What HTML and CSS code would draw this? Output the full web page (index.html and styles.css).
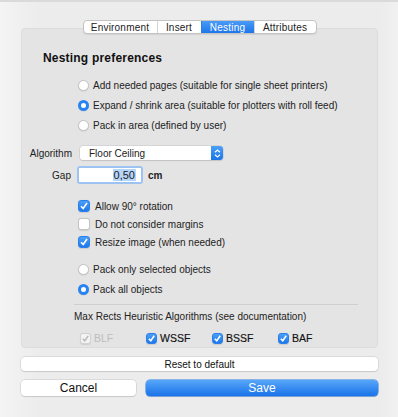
FILE: index.html
```html
<!DOCTYPE html>
<html lang="en">
<head>
    <meta charset="utf-8" />
    <title>Preferences</title>
    <link rel="stylesheet" href="styles.css">
</head>
<body>
    <div class="window">
        <div class="tabs">
            <span class="tab">Environment</span>
            <span class="tab">Insert</span>
            <span class="tab active">Nesting</span>
            <span class="tab">Attributes</span>
        </div>

        <div class="group">
            <h2 class="title">Nesting preferences</h2>

            <div class="options">
                <label class="row radio-row"><span class="radio"></span>Add needed pages (suitable for single sheet printers)</label>
                <label class="row radio-row"><span class="radio on"></span>Expand / shrink area (suitable for plotters with roll feed)</label>
                <label class="row radio-row"><span class="radio"></span>Pack in area (defined by user)</label>
            </div>

            <div class="field algo">
                <span class="field-label">Algorithm</span>
                <div class="popup">
                    <span class="popup-text">Floor Ceiling</span>
                    <span class="stepper">
                        <svg width="7" height="9" viewBox="0 0 7 9">
                            <path d="M1 3.2 L3.5 1 L6 3.2 M1 5.8 L3.5 8 L6 5.8" fill="none" stroke="#fff" stroke-width="1.2" />
                        </svg>
                    </span>
                </div>
            </div>

            <div class="field gap">
                <span class="field-label gap-label">Gap</span>
                <div class="input-ring">
                    <div class="input"><span class="sel">0,50</span></div>
                </div>
                <span class="unit">cm</span>
            </div>

            <div class="checks">
                <label class="row check-row"><span class="check on"><svg width="10" height="10" viewBox="0 0 10 10"><path d="M2 5.2 L4.2 7.5 L8 2" fill="none" stroke="#fff" stroke-width="1.6" /></svg></span>Allow 90° rotation</label>
                <label class="row check-row"><span class="check"></span>Do not consider margins</label>
                <label class="row check-row"><span class="check on"><svg width="10" height="10" viewBox="0 0 10 10"><path d="M2 5.2 L4.2 7.5 L8 2" fill="none" stroke="#fff" stroke-width="1.6" /></svg></span>Resize image (when needed)</label>
            </div>

            <div class="options second">
                <label class="row radio-row"><span class="radio"></span>Pack only selected objects</label>
                <label class="row radio-row"><span class="radio on"></span>Pack all objects</label>
            </div>

            <div class="separator"></div>

            <div class="heuristic">Max Rects Heuristic Algorithms (see documentation)</div>

            <div class="heuristic-row">
                <label class="hcheck disabled"><span class="check small off"><svg width="9" height="9" viewBox="0 0 10 10"><path d="M2 5.2 L4.2 7.5 L8 2" fill="none" stroke="#b8b8b8" stroke-width="1.6" /></svg></span>BLF</label>
                <label class="hcheck"><span class="check small on"><svg width="9" height="9" viewBox="0 0 10 10"><path d="M2 5.2 L4.2 7.5 L8 2" fill="none" stroke="#fff" stroke-width="1.7" /></svg></span>WSSF</label>
                <label class="hcheck"><span class="check small on"><svg width="9" height="9" viewBox="0 0 10 10"><path d="M2 5.2 L4.2 7.5 L8 2" fill="none" stroke="#fff" stroke-width="1.7" /></svg></span>BSSF</label>
                <label class="hcheck"><span class="check small on"><svg width="9" height="9" viewBox="0 0 10 10"><path d="M2 5.2 L4.2 7.5 L8 2" fill="none" stroke="#fff" stroke-width="1.7" /></svg></span>BAF</label>
            </div>
        </div>

        <button class="btn reset">Reset to default</button>

        <div class="buttons">
            <button class="btn cancel">Cancel</button>
            <button class="btn save">Save</button>
        </div>
    </div>
</body>
</html>
```

FILE: styles.css
```css
html, body {
    margin: 0;
    padding: 0;
}

body {
    width: 398px;
    height: 417px;
    overflow: hidden;
    background: linear-gradient(to right, #f4f4f4 0px, #ececec 40px, #ececec 380px, #f1f1f1 398px);
    font-family: "Liberation Sans", Arial, sans-serif;
    font-size: 10px;
    color: #222;
}

.window {
    display: flex;
    flex-direction: column;
    padding: 18px 20px 0 21px;
    height: 417px;
    box-sizing: border-box;
    border-top: 2px solid #dadada;
}

/* tab strip */
.tabs {
    display: flex;
    align-self: center;
    position: relative;
    z-index: 1;
    margin-bottom: -6px;
    height: 12px;
    border: 1px solid #c4c4c4;
    border-radius: 4px;
    background: #fff;
    box-shadow: 0 1px 1px rgba(0, 0, 0, 0.08);
    overflow: hidden;
}

.tab {
    display: flex;
    align-items: center;
    justify-content: center;
    height: 12px;
    border-left: 1px solid #d4d4d4;
    letter-spacing: 0.2px;
}

.tab:nth-child(1) { width: 73px; border-left: none; }
.tab:nth-child(2) { width: 43px; }
.tab:nth-child(3) { width: 52px; }
.tab:nth-child(4) { width: 61px; }

.tab.active {
    background: linear-gradient(#4a9bf7, #1d76e9);
    color: #fff;
    border-left-color: #2a7fe9;
}

/* group box */
.group {
    height: 320px;
    box-sizing: border-box;
    background: #e4e4e4;
    border: 1px solid #dcdcdc;
    border-radius: 4px;
    padding: 21px 0 0 0;
    display: flex;
    flex-direction: column;
}

.title {
    margin: 0 0 0 21px;
    height: 16px;
    line-height: 16px;
    font-size: 12px;
    font-weight: bold;
    color: #111;
    letter-spacing: 0.2px;
}

.options {
    display: flex;
    flex-direction: column;
    margin: 9px 0 0 56px;
}

.options.second {
    margin-top: 8px;
}

.row {
    display: flex;
    align-items: center;
}

.radio-row {
    height: 20px;
}

.radio {
    width: 11px;
    height: 11px;
    border-radius: 50%;
    background: #fff;
    border: 1px solid #c2c2c2;
    box-sizing: border-box;
    margin-right: 4px;
    box-shadow: 0 0.5px 1px rgba(0, 0, 0, 0.1);
}

.radio.on {
    border: 3px solid #2a83f2;
    background: #fff;
}

/* fields */
.field {
    display: flex;
    align-items: center;
}

.algo {
    height: 16px;
    margin-top: 10px;
}

.field-label {
    width: 50px;
    text-align: right;
    margin-right: 8px;
}

.popup {
    display: flex;
    align-items: center;
    width: 143px;
    height: 14px;
    background: #fff;
    border-radius: 3px;
    box-shadow: 0 0 0 0.5px #c6c6c6, 0 1px 1px rgba(0, 0, 0, 0.15);
    overflow: hidden;
}

.popup-text {
    flex: 1;
    padding-left: 9px;
}

.stepper {
    display: flex;
    align-items: center;
    justify-content: center;
    width: 12px;
    height: 14px;
    background: linear-gradient(#4ba0f8, #1b74e8);
}

.gap {
    height: 18px;
    margin-top: 5px;
}

.gap-label {
    width: 49px;
    margin-right: 6px;
}

.input-ring {
    padding: 2px;
    border-radius: 3px;
    background: #9cc3f1;
}

.input {
    width: 62px;
    height: 14px;
    box-sizing: border-box;
    background: #fff;
    display: flex;
    align-items: center;
    justify-content: flex-end;
    padding-right: 5px;
    font-size: 11px;
}

.sel {
    background: #b5d5fb;
    padding: 0 1px;
}

.unit {
    margin-left: 5px;
    font-weight: bold;
}

.checks {
    display: flex;
    flex-direction: column;
    margin: 13px 0 0 56px;
}

.check-row {
    height: 18px;
}

.check {
    display: flex;
    align-items: center;
    justify-content: center;
    width: 12px;
    height: 12px;
    box-sizing: border-box;
    border-radius: 3px;
    background: #fff;
    border: 1px solid #c4c4c4;
    margin-right: 5px;
    box-shadow: 0 0.5px 1px rgba(0, 0, 0, 0.1);
}

.check.on {
    background: linear-gradient(#4a9ff8, #1e78eb);
    border-color: #2a7fe9;
}

.check.small {
    width: 11px;
    height: 11px;
    margin-right: 3px;
}

.check.off {
    background: #f3f3f3;
    border-color: #d2d2d2;
}

.separator {
    height: 1px;
    background: #cfcfcf;
    margin: 5px 19px 0 52px;
}

.heuristic {
    margin: 5px 0 0 52px;
    height: 14px;
    line-height: 14px;
}

.heuristic-row {
    display: flex;
    margin: 6px 0 0 58px;
    height: 16px;
}

.hcheck {
    display: flex;
    align-items: center;
    width: 66px;
    color: #111;
    font-size: 10.5px;
    -webkit-text-stroke: 0.15px #111;
}

.hcheck.disabled {
    color: #bdbdbd;
    -webkit-text-stroke: 0;
}

/* buttons */
.btn {
    font-family: "Liberation Sans", Arial, sans-serif;
    font-size: 10px;
    color: #111;
    border: none;
    background: #fff;
    border-radius: 4px;
    box-shadow: 0 0 0 0.5px #c8c8c8, 0 1px 1px rgba(0, 0, 0, 0.15);
    padding: 0;
}

.reset {
    margin-top: 9px;
    height: 14px;
}

.buttons {
    display: flex;
    gap: 10px;
    margin-top: 9px;
}

.cancel {
    width: 115px;
    height: 16px;
    font-size: 12px;
}

.save {
    flex: 1;
    height: 16px;
    font-size: 12px;
    color: #fff;
    background: linear-gradient(#57a6f9, #1a73e8);
    box-shadow: 0 0 0 0.5px #2a78e0, 0 1px 1px rgba(0, 0, 0, 0.15);
}
```
